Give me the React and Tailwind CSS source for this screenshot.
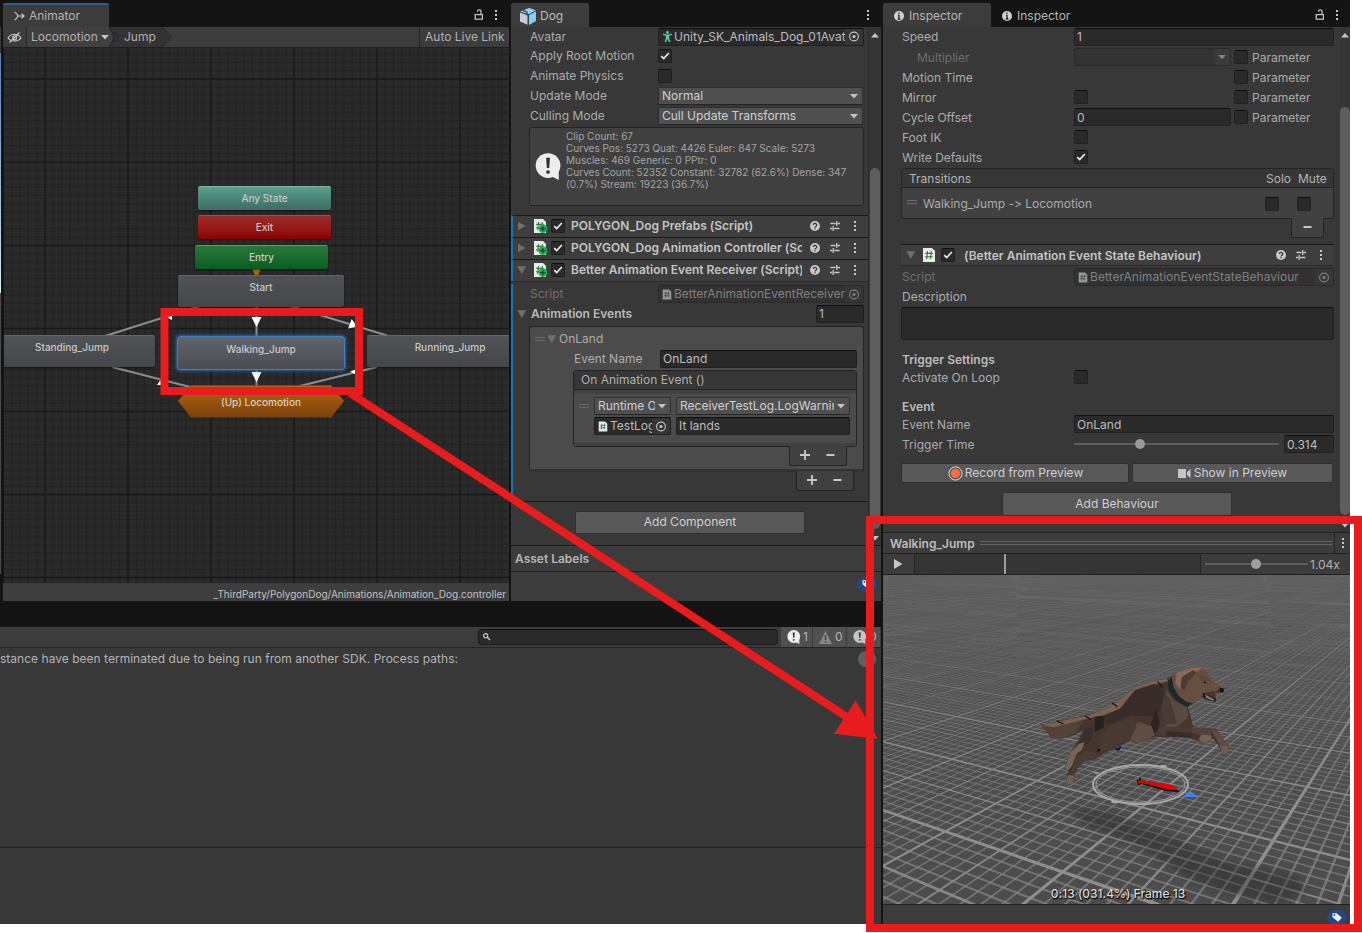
import React from "react";

/* ---------- small shared pieces ---------- */

function Kebab({ className = "" }) {
  return (
    <svg className={"shrink-0 " + className} width="4" height="12" viewBox="0 0 4 12" fill="#c8c8c8">
      <rect x="1" y="1" width="2" height="2" />
      <rect x="1" y="5" width="2" height="2" />
      <rect x="1" y="9" width="2" height="2" />
    </svg>
  );
}

function Lock() {
  return (
    <svg className="shrink-0" width="10" height="12" viewBox="0 0 10 12" fill="none" stroke="#c8c8c8" strokeWidth="1.2">
      <rect x="1.2" y="5.6" width="7.2" height="4.6" />
      <path d="M7 5.6V3a1.6 1.8 0 0 0-3.6-.4" />
    </svg>
  );
}

function Caret({ color = "#c4c4c4" }) {
  return (
    <svg className="shrink-0" width="8" height="5" viewBox="0 0 8 5">
      <path d="M0 0h8L4 4.6z" fill={color} />
    </svg>
  );
}

function Fold({ open }) {
  return (
    <svg className="shrink-0" width="10" height="10" viewBox="0 0 10 10" fill="#6f6f6f">
      {open ? <path d="M.4 1.200h8.800L4.800 9z" /> : <path d="M1 .8v8.400L8.600 5z" />}
    </svg>
  );
}

function Check({ on, className = "" }) {
  return (
    <span
      className={
        "flex h-[14px] w-[14px] shrink-0 items-center justify-center rounded-[2px] border border-[#202020] border-t-[#0f0f0f] bg-[#2a2a2a] " +
        className
      }
    >
      {on && (
        <svg width="10" height="8" viewBox="0 0 10 8" fill="none" stroke="#efefef" strokeWidth="1.6">
          <path d="M1.2 4.2 3.7 6.6 8.8 1" />
        </svg>
      )}
    </span>
  );
}

function Picker({ dim }) {
  return (
    <span className={"flex h-4 w-[18px] shrink-0 items-center justify-center " + (dim ? "bg-[#373737]" : "bg-[#353535]")}>
      <svg width="11" height="11" viewBox="0 0 11 11">
        <circle cx="5" cy="5.500" r="4.4" fill="none" stroke={dim ? "#808080" : "#c4c4c4"} strokeWidth="1.100" />
        <circle cx="5" cy="5.500" r="1.6" fill={dim ? "#808080" : "#c4c4c4"} />
      </svg>
    </span>
  );
}

function ScriptIcon({ dim, badge, big }) {
  return (
    <svg className="shrink-0" width={big ? 14 : 10} height={big ? 14 : 11} viewBox="0 0 14 14" opacity={dim ? 0.55 : 1}>
      <path d="M1 0h9l3 3v11H1z" fill="#e8ece8" />
      <path d="M5.6 3 4.7 11M9.3 3 8.4 11M3.2 5.4h7.6M3 8.7h7.6" stroke="#2c7a35" strokeWidth="1.1" fill="none" />
      {badge && (
        <g>
          <circle cx="9.8" cy="9.6" r="4.4" fill="#10b860" />
          <path d="M9.8 7v5.2M7.2 9.6h5.2" stroke="#0b3a1f" strokeWidth="1.2" />
        </g>
      )}
    </svg>
  );
}

function HelpIcon() {
  return (
    <svg className="shrink-0" width="10" height="10" viewBox="0 0 10 10">
      <circle cx="5" cy="5" r="5" fill="#c8c8c8" />
      <path d="M3.3 4a1.7 1.6 0 1 1 2.4 1.4c-.5.3-.7.5-.7 1" stroke="#333" strokeWidth="1.2" fill="none" />
      <rect x="4.4" y="7.2" width="1.2" height="1.2" fill="#333" />
    </svg>
  );
}

function PresetIcon() {
  return (
    <svg className="shrink-0" width="11" height="10" viewBox="0 0 11 10" stroke="#c8c8c8" strokeWidth="1.3" fill="none">
      <path d="M.5 2.500h5M7.500 2.500h2.500M6.700 0v5M0 7.500h2.200M4.200 7.500H9.500M3.200 5v5" />
    </svg>
  );
}

function InfoDot() {
  return (
    <svg className="shrink-0" width="10" height="10" viewBox="0 0 10 10">
      <circle cx="5" cy="5" r="5" fill="#d0d0d0" />
      <path d="M5 1.6v1.4M5 4v4M4 4.4h1M3.8 8h2.6" stroke="#222" strokeWidth="1.3" fill="none" />
    </svg>
  );
}

function Bubble({ size, fill, mark = "#333" }) {
  return (
    <svg className="shrink-0" width={size} height={size} viewBox="0 0 28 29">
      <circle cx="13.5" cy="13.5" r="13.3" fill={fill} />
      <path d="M17 25l8 4v-9z" fill={fill} />
      <path d="M11.4 5h4.2l-.8 11h-2.6z" fill={mark} />
      <circle cx="13.5" cy="20.4" r="2" fill={mark} />
    </svg>
  );
}

function TagBadge() {
  return (
    <svg className="shrink-0" width="20" height="15" viewBox="0 0 20 15">
      <ellipse cx="10" cy="7.5" rx="10" ry="7.5" fill="#234a80" />
      <path d="M5.5 3.2h4.3l5 4.6-3.7 4-5.6-4.6z" fill="#eef2f8" />
      <circle cx="7.4" cy="5" r=".9" fill="#234a80" />
    </svg>
  );
}

function Grip() {
  return <span className="h-1 w-[10px] shrink-0 border-y border-[#6a6a6a]" />;
}

function Field({ children, className = "" }) {
  return (
    <span
      className={
        "flex h-[18px] items-center overflow-hidden rounded-[2px] border border-[#202020] border-t-[#0f0f0f] bg-[#2a2a2a] pl-[2px] text-[#bcbcbc] " +
        className
      }
    >
      {children}
    </span>
  );
}

function Dropdown({ children, className = "" }) {
  return (
    <span
      className={
        "flex h-[18px] items-center rounded-[2px] border border-[#303030] border-b-[#242424] bg-[#505050] pl-[3px] pr-1 text-[#cfcfcf] " +
        className
      }
    >
      <span className="mr-[3px] min-w-0 flex-1 overflow-hidden">{children}</span>
      <Caret />
    </span>
  );
}

function PlusMinus({ plus, className = "" }) {
  return (
    <span
      className={
        "flex h-5 items-center justify-center gap-4 rounded-b-[3px] border border-t-0 border-[#242424] bg-[#414141] pb-px " +
        className
      }
    >
      {plus && (
        <svg width="10" height="10" viewBox="0 0 10 10">
          <path d="M5 0v10M0 5h10" stroke="#c8c8c8" strokeWidth="1.8" />
        </svg>
      )}
      <svg width="9" height="10" viewBox="0 0 9 10">
        <path d="M.5 5h8" stroke="#c8c8c8" strokeWidth="2" />
      </svg>
    </span>
  );
}

/* ---------- animator ---------- */

const vMajor = [41, 124, 207, 290, 373, 456];
const hMajor = [31, 114.3, 197.5, 280.5, 363.5, 446.5, 529.5];
const vMinor = Array.from({ length: 61 }, (_, i) => -0.5 + i * 8.3);
const hMinor = Array.from({ length: 65 }, (_, i) => -2.2 + i * 8.31);

function GraphLines() {
  return (
    <svg className="absolute inset-0" width="505" height="535" viewBox="0 0 505 535">
      <rect width="505" height="535" fill="#2a2a2a" />
      <g stroke="#232323" strokeWidth="1">
        {vMinor.map((x) => (
          <path key={"v" + x} d={`M${x} 0V535`} />
        ))}
        {hMinor.map((y) => (
          <path key={"h" + y} d={`M0 ${y}H505`} />
        ))}
      </g>
      <g stroke="#1a1a1a" strokeWidth="1.3">
        {vMajor.map((x) => (
          <path key={"V" + x} d={`M${x} 0V535`} />
        ))}
        {hMajor.map((y) => (
          <path key={"H" + y} d={`M0 ${y}H505`} />
        ))}
      </g>
      <g stroke="#8c8c8c" strokeWidth="2" fill="none">
        <path d="M101 288 199 257M283 257 383 287.500M252.500 258V292M252.500 320V340M108 319 190 340M373 319 292 339" />
      </g>
      <g fill="#fff">
        <path d="M247.500 269h10l-5 10zM247.500 324h10l-5 10zM347.700 271l-3.500 9.500 9-1.800zM163 269.500l5-1.500 0 4zM153 337h7l-4-4.500zM354 320.500l-8 3 8 4z" />
      </g>
      <path d="M248 221h9l-3 6h-3z" fill="#a36b05" />
      <linearGradient id="up" x1="0" y1="0" x2="0" y2="1">
        <stop offset="0" stopColor="#b56414" />
        <stop offset="1" stopColor="#7c430a" />
      </linearGradient>
      <path d="M187 337.500h140l13 15.500-13 16H187L174 353z" fill="url(#up)" stroke="#7a4a14" strokeWidth=".6" />
    </svg>
  );
}

function Node({ className, children }) {
  return (
    <div className={"absolute flex justify-center rounded-[2px] text-[10px] font-medium text-[#c8c8c8] shadow-[0_1px_2px_#0008] " + className}>
      {children}
    </div>
  );
}

const GREY = "h-8 w-[166px] border-t border-[#646669] bg-linear-to-b from-[#505357] to-[#454648] leading-[23px]";

function Animator() {
  return (
    <section className="flex w-[506px] shrink-0 flex-col">
      <div className="flex h-[27px] items-end justify-between">
        <div className="flex h-6 w-[106px] items-center gap-1 rounded-t-[2px] border-t-2 border-[#2d5c8c] bg-[#3c3c3c] pl-[11px] text-[#b4b4b4]">
          <svg width="11" height="10" viewBox="0 0 11 10" fill="none" stroke="#c8c8c8" strokeWidth="1.2">
            <path d="M.5 1c2 .3 2.500 4 4.500 4H10M.5 9C2.500 8.700 3 5 5 5M7.500 2.800 10 5 7.500 7.200" />
          </svg>
          Animator
        </div>
        <div className="flex h-6 items-center gap-[10px] pr-[11px]">
          <Lock />
          <Kebab />
        </div>
      </div>
      <div className="flex h-[21px] items-center border-b border-[#202020] bg-[#3c3c3c] text-[#b0b0b0]">
        <span className="flex h-5 w-6 items-center justify-center border-r border-[#262626]">
          <svg width="15" height="11" viewBox="0 0 15 11" fill="none" stroke="#c4c4c4" strokeWidth="1.200">
            <path d="M1 6c3-5 10-5 13 0-3 4-10 4-13 0z" />
            <circle cx="7.500" cy="5.800" r="2" />
            <path d="M12.500.5 2.500 10.500" />
          </svg>
        </span>
        <span className="flex h-5 w-[82px] items-center justify-between bg-[#404040] pl-1">
          Locomotion <Caret />
        </span>
        <svg width="10" height="20" viewBox="0 0 10 20" fill="none">
          <path d="M0 0l5.500 10L0 20z" fill="#404040" />
          <path d="M0 0h4l6 0v20H0l5.500-10z" fill="#333" />
          <path d="M0 0l5.500 10L0 20M4.500 4.500v11L9.500 10z" stroke="#262626" />
        </svg>
        <span className="flex h-5 w-[43px] items-center bg-[#333] pl-[5px]">Jump</span>
        <svg width="11" height="20" viewBox="0 0 11 20">
          <path d="M0 0l10 10L0 20z" fill="#333" />
          <path d="M0 0l10 10L0 20" fill="none" stroke="#292929" />
        </svg>
        <span className="ml-auto flex h-5 w-[90px] items-center border-l border-[#242424] pl-[5px]">Auto Live Link</span>
      </div>
      <div className="relative ml-px h-[535px] overflow-hidden">
        <GraphLines />
        <Node className="left-[194px] top-[138px] h-6 w-[133px] border-t border-[#7ab8a4] bg-linear-to-b from-[#5b9e8b] to-[#3c6d64] leading-[23px]">Any State</Node>
        <Node className="left-[194px] top-[167px] h-6 w-[133px] border-t border-[#b04a4a] bg-linear-to-b from-[#9c2b2b] to-[#8c0000] leading-[23px]">Exit</Node>
        <Node className="left-[191px] top-[197px] h-6 w-[133px] border-t border-[#5a9a66] bg-linear-to-b from-[#28783a] to-[#065e22] leading-[23px]">Entry</Node>
        <Node className={GREY + " left-[174px] top-[227px]"}>Start</Node>
        <Node className={GREY + " left-[-15px] top-[287px]"}>Standing_Jump</Node>
        <Node className={GREY + " left-[363px] top-[287px]"}>Running_Jump</Node>
        <div className="absolute left-[173px] top-[288px] flex h-[34px] w-[168px] justify-center rounded-[3px] border border-[#3f80c4] bg-linear-to-b from-[#60646d] to-[#4a4c50] text-[10px] font-medium leading-[24px] text-[#c8c8c8] shadow-[0_0_3px_1px_#2766a8]">
          Walking_Jump
        </div>
        <div className="absolute left-[174px] top-[342px] w-[166px] text-center text-[10px] font-medium leading-6 text-[#d8cfc4]">(Up) Locomotion</div>
      </div>
      <div className="flex h-[18px] items-center justify-end bg-[#3e3e3e] pr-[3px] pt-[3px] text-[10px] text-[#c0c0c0]">
        _ThirdParty/PolygonDog/Animations/Animation_Dog.controller
      </div>
    </section>
  );
}

/* ---------- dog inspector ---------- */

function DogRow({ label, children, className = "h-5" }) {
  return (
    <div className={"flex items-center pl-[19px] " + className}>
      <span className="w-[128px] shrink-0">{label}</span>
      {children}
    </div>
  );
}

function ComponentHeader({ title, open }) {
  return (
    <div className="flex h-[22px] items-center border-l-2 border-t border-l-[#1b75b5] border-t-[#1a1a1a] bg-[#3e3e3e] pb-px pl-1">
      <Fold open={open} />
      <span className="ml-1 flex w-[18px] justify-center">
        <ScriptIcon big badge />
      </span>
      <Check on className="ml-[2px]" />
      <span className="ml-[6px] mr-px w-[231px] shrink-0 overflow-hidden font-semibold text-[#c4c4c4]">{title}</span>
      <span className="ml-[7px] flex flex-1 items-center">
        <HelpIcon />
        <span className="w-[10px]" />
        <PresetIcon />
        <Kebab className="ml-[12px]" />
      </span>
    </div>
  );
}

function DogPanel() {
  return (
    <section className="flex w-[370px] shrink-0 flex-col">
      <div className="flex h-[27px] items-end justify-between">
        <div className="flex h-6 w-[78px] items-center gap-1 rounded-t-[2px] bg-[#3c3c3c] pl-[9px] pt-[2px] text-[#b8b8b8]">
          <svg width="16" height="17" viewBox="0 0 16 17">
            <path d="M9 0l7 2.600v10.400L9 17z" fill="#7fd0f5" />
            <path d="M0 3.500 9 0l7 2.600-8 4z" fill="#8fd6f6" />
            <path d="M0 4l8 3v10l-8-3.500z" fill="#c8ccd0" />
            <path d="M8 7l8-4.200M8 7v10M0 4l8 3" stroke="#2a3c48" strokeWidth="1" fill="none" />
            <path d="M3 2.400l4 1.800v3" stroke="#2a3c48" strokeWidth="1.200" fill="none" />
          </svg>
          Dog
        </div>
        <div className="flex h-6 items-center pr-[11px]">
          <Kebab />
        </div>
      </div>
      <div className="flex h-[518px] bg-[#383838]">
        <div className="flex w-[357px] flex-col text-[#ababab]">
          <DogRow label="Avatar" className="h-[19px]">
            <Field className="w-[206px]">
              <svg className="mx-[2px] shrink-0" width="9" height="11" viewBox="0 0 9 11" fill="#5ec8b0">
                <circle cx="4.500" cy="1.500" r="1.400" />
                <path d="M0 2.400l3 1h3l3-1v1.300L6.200 5v2.500L7.500 11H6L4.500 8 3 11H1.500l1.300-3.500V5L0 3.700z" />
              </svg>
              <span className="min-w-0 flex-1 overflow-hidden">Unity_SK_Animals_Dog_01Avat</span>
              <Picker />
            </Field>
          </DogRow>
          <DogRow label="Apply Root Motion"><Check on /></DogRow>
          <DogRow label="Animate Physics"><Check /></DogRow>
          <DogRow label="Update Mode"><Dropdown className="w-[205px]">Normal</Dropdown></DogRow>
          <DogRow label="Culling Mode"><Dropdown className="w-[205px]">Cull Update Transforms</Dropdown></DogRow>
          <div className="ml-[18px] mt-px flex h-[79px] w-[335px] shrink-0 items-center rounded-[3px] border border-[#232323] bg-[#404040] pl-[5px]">
            <Bubble size={27} fill="#ededed" />
            <p className="mb-[13px] ml-1 whitespace-pre text-[10px] leading-[12.100px] text-[#a4a4a4]">
              {"Clip Count: 67\nCurves Pos: 5273 Quat: 4426 Euler: 847 Scale: 5273\nMuscles: 469 Generic: 0 PPtr: 0\nCurves Count: 52352 Constant: 32782 (62.6%) Dense: 347\n(0.7%) Stream: 19223 (36.7%)"}
            </p>
          </div>
          <div className="h-[9px]" />
          <ComponentHeader title="POLYGON_Dog Prefabs (Script)" />
          <ComponentHeader title="POLYGON_Dog Animation Controller (Script)" />
          <ComponentHeader title="Better Animation Event Receiver (Script)" open />
          <div className="h-[3px] border-t border-[#2c2c2c]" />
          <div className="flex h-[217px] flex-col border-l-2 border-[#1b75b5]">
            <div className="flex h-5 items-center pl-[17px] text-[#707070]">
              <span className="w-[128px]">Script</span>
              <span className="flex h-[18px] w-[206px] items-center rounded-[2px] border border-[#2a2a2a] bg-[#323232] pl-[3px] text-[#808080]">
                <ScriptIcon dim />
                <span className="ml-[2px] min-w-0 flex-1 overflow-hidden">BetterAnimationEventReceiver</span>
                <Picker dim />
              </span>
            </div>
            <div className="flex h-5 items-center pl-1">
              <Fold open />
              <span className="ml-1 flex-1 font-semibold text-[#b8b8b8]">Animation Events</span>
              <Field className="mr-1 w-[48px]">1</Field>
            </div>
            <div className="ml-4 mt-[2px] flex h-[146px] w-[335px] shrink-0 flex-col rounded-[3px] border border-[#242424] border-b-[3px] border-b-[#323232] bg-[#4b4b4b] pt-[2px]">
              <div className="flex h-5 items-center pl-[5px]">
                <Grip />
                <span className="w-[2px]" />
                <Fold open />
                <span className="ml-[2px]">OnLand</span>
              </div>
              <div className="flex h-5 items-center pl-[44px]">
                <span className="w-[86px]">Event Name</span>
                <Field className="w-[197px]">OnLand</Field>
              </div>
              <div className="ml-[43px] mt-px h-[77px] w-[284px] shrink-0 rounded-[3px] border border-[#242424] bg-[#4b4b4b]">
                <div className="flex h-[19px] items-center border-b border-[#242424] bg-[#363636] pl-[7px] text-[#b0b0b0]">On Animation Event ()</div>
                <div className="h-1 bg-[#414141]" />
                <div className="mt-[2px] flex h-5 items-center pl-[5px]">
                  <Grip />
                  <Dropdown className="ml-[5px] w-[77px] whitespace-nowrap">Runtime Only</Dropdown>
                  <Dropdown className="ml-[5px] w-[174px] whitespace-nowrap">ReceiverTestLog.LogWarning</Dropdown>
                </div>
                <div className="flex h-5 items-center pl-5">
                  <Field className="w-[77px] pl-[3px]">
                    <ScriptIcon />
                    <span className="ml-[2px] min-w-0 flex-1 overflow-hidden">TestLog</span>
                    <Picker />
                  </Field>
                  <Field className="ml-[5px] w-[174px]">It lands</Field>
                </div>
                <div className="mt-[7px] h-[3px] bg-[#414141]" />
              </div>
              <PlusMinus plus className="-mt-px ml-[259px] w-[58px] pr-[2px]" />
            </div>
            <PlusMinus plus className="-mt-px ml-[283px] w-[58px] shrink-0 pr-[2px]" />
          </div>
          <div className="h-11 border-t border-[#1a1a1a] pt-[9px]">
            <button className="ml-[64px] block h-[23px] w-[230px] rounded-[2px] border border-[#303030] bg-[#585858] pb-[2px] text-center text-[#cfcfcf]">
              Add Component
            </button>
          </div>
        </div>
        <div className="flex w-[13px] flex-col items-center border-l border-[#2e2e2e] bg-[#353535] pt-[6px]">
          <svg width="8" height="5" viewBox="0 0 8 5"><path d="M0 4.500h8L4 0z" fill="#c4c4c4" /></svg>
          <span className="mt-[130px] h-[361px] w-[10px] rounded-full bg-[#5e5e5e]" />
          <span className="mt-[7px]"><Caret /></span>
        </div>
      </div>
      <div className="flex h-[26px] items-center border-t border-[#1c1c1c] bg-[#3c3c3c] pl-1 font-semibold text-[#b4b4b4]">Asset Labels</div>
      <div className="flex h-[30px] items-center justify-end border-t border-[#1c1c1c] bg-[#3c3c3c] pb-1 pr-1">
        <TagBadge />
      </div>
    </section>
  );
}

/* ---------- console ---------- */

function ConsolePanel() {
  return (
    <section className="flex flex-1 flex-col bg-[#383838] text-[#b4b4b4]">
      <div className="flex h-[21px] items-center border-b border-[#232323] bg-[#3c3c3c]">
        <div className="ml-[478px] flex h-4 w-[300px] items-center rounded-[4px] border border-[#1c1c1c] border-t-[#0f0f0f] bg-[#2a2a2a] pl-1">
          <svg width="8" height="8" viewBox="0 0 8 8" fill="none" stroke="#c8c8c8" strokeWidth="1.100">
            <circle cx="2.700" cy="2.700" r="2.100" />
            <path d="M4.300 4.300 7 7" strokeWidth="1.400" />
          </svg>
        </div>
        <div className="ml-[3px] flex h-5 gap-px">
          <span className="flex w-[31px] items-center gap-[2px] bg-[#505050] pl-[6px]">
            <Bubble size={14} fill="#eee" /> 1
          </span>
          <span className="flex w-[33px] items-center gap-[3px] bg-[#505050] pl-[6px]">
            <svg width="13" height="13" viewBox="0 0 13 13"><path d="M6.500 0 13 13H0z" fill="#858585" /><path d="M6.500 4v5M6.500 10v1.500" stroke="#444" strokeWidth="1.400" /></svg> 0
          </span>
          <span className="flex w-[33px] items-center gap-[2px] bg-[#505050] pl-[6px]">
            <Bubble size={14} fill="#c4c4c4" /> 0
          </span>
        </div>
      </div>
      <div className="flex h-[199px] items-start justify-between">
        <p className="pt-[3px] tracking-[0.02px]">stance have been terminated due to being run from another SDK. Process paths:</p>
        <span className="mr-[5px] mt-[3px] flex h-4 w-[18px] items-center justify-center rounded-full bg-[#606060] text-[10px] text-[#333]">1</span>
      </div>
      <div className="flex-1 border-t border-[#242424]" />
    </section>
  );
}

/* ---------- state inspector ---------- */

function StateRow({ label, param, dim, children }) {
  return (
    <div className="flex h-5 items-center">
      <span className={"shrink-0 pt-px " + (dim ? "w-[157px] pl-[15px] text-[#6e6e6e]" : "w-[172px]")}>{label}</span>
      {dim && <span className="w-[15px]" />}
      <span className="flex w-[157px] shrink-0">{children}</span>
      {param && (
        <span className="ml-[3px] flex items-center gap-1">
          <Check /> <span className="pt-px">Parameter</span>
        </span>
      )}
    </div>
  );
}

function StateInspector() {
  return (
    <div className="flex h-[505px] bg-[#383838]">
      <div className="flex w-[457px] shrink-0 flex-col pl-[19px] text-[#ababab]">
        <div className="flex h-5 items-center">
          <span className="w-[172px]">Speed</span>
          <Field className="w-[260px]">1</Field>
        </div>
        <StateRow label="Multiplier" dim param>
          <span className="flex h-[18px] w-[157px] items-center justify-end rounded-[2px] border border-[#2a2a2a] bg-[#343434]">
            <span className="flex h-4 w-4 items-center justify-center bg-[#3a3a3a]"><Caret color="#808080" /></span>
          </span>
        </StateRow>
        <StateRow label="Motion Time" param />
        <StateRow label="Mirror" param><Check /></StateRow>
        <StateRow label="Cycle Offset" param><Field className="w-[157px] pt-px">0</Field></StateRow>
        <StateRow label="Foot IK"><Check /></StateRow>
        <StateRow label="Write Defaults"><Check on /></StateRow>
        <div className="-ml-px mt-px h-[51px] w-[433px] shrink-0 rounded-[3px] border border-[#242424] bg-[#414141]">
          <div className="flex h-[19px] items-center border-b border-[#242424] bg-[#363636] pl-[7px] pt-px text-[#b4b4b4]">
            <span className="w-[357px]">Transitions</span>
            <span className="w-[32px]">Solo</span>
            <span>Mute</span>
          </div>
          <div className="flex h-[30px] items-center pl-[5px] pt-px">
            <span className="mb-[3px] flex"><Grip /></span>
            <span className="ml-[6px] w-[342px]">Walking_Jump -&gt; Locomotion</span>
            <Check />
            <Check className="ml-[18px]" />
          </div>
        </div>
        <PlusMinus className="-mt-px ml-[389px] w-[33px] shrink-0 pr-px" />
        <div className="-ml-px mt-[6px] flex h-[22px] w-[433px] shrink-0 items-center border-b border-t border-b-[#2c2c2c] border-t-[#1a1a1a] bg-[#3e3e3e] pl-[5px]">
          <Fold open />
          <span className="ml-[6px] flex"><ScriptIcon big /></span>
          <Check on className="ml-[5px]" />
          <span className="ml-[9px] flex-1 pt-px font-semibold tracking-[0.02px] text-[#c4c4c4]">(Better Animation Event State Behaviour)</span>
          <HelpIcon />
          <span className="w-[10px]" />
          <PresetIcon />
          <Kebab className="ml-[12px] mr-[11px]" />
        </div>
        <div className="mt-px flex h-5 items-center text-[#707070]">
          <span className="w-[172px]">Script</span>
          <span className="flex h-[18px] w-[260px] items-center rounded-[2px] border border-[#2a2a2a] bg-[#323232] pl-[3px] text-[#808080]">
            <ScriptIcon dim />
            <span className="ml-[2px] flex-1 tracking-[0.03px]">BetterAnimationEventStateBehaviour</span>
            <Picker dim />
          </span>
        </div>
        <div className="flex h-5 items-center">Description</div>
        <div className="-ml-px h-[33px] w-[433px] rounded-[3px] border border-[#1e1e1e] border-t-[#0f0f0f] bg-[#2a2a2a]" />
        <div className="mt-[10px] flex h-[18px] items-center pt-px font-semibold text-[#bcbcbc]">Trigger Settings</div>
        <div className="-mt-px"><StateRow label="Activate On Loop"><Check /></StateRow></div>
        <div className="mt-[10px] flex h-[18px] items-center pt-px font-semibold text-[#bcbcbc]">Event</div>
        <div className="-mt-px flex h-5 items-center">
          <span className="w-[172px] pt-px">Event Name</span>
          <Field className="w-[260px] pt-px">OnLand</Field>
        </div>
        <div className="flex h-5 items-center">
          <span className="w-[172px] pt-px">Trigger Time</span>
          <span className="flex w-[205px] items-center">
            <span className="h-[2px] w-[61px] bg-[#5e5e5e]" />
            <span className="h-[10px] w-[10px] rounded-full bg-[#999]" />
            <span className="h-[2px] flex-1 bg-[#5e5e5e]" />
          </span>
          <Field className="ml-[5px] w-[50px] pt-px">0.314</Field>
        </div>
        <div className="-ml-px mt-[9px] flex h-5 gap-[3px] text-[#cfcfcf]">
          <button className="flex w-[228px] items-center justify-center rounded-[2px] border border-[#303030] bg-[#585858] pl-px">
            <svg width="15" height="15" viewBox="0 0 15 15"><circle cx="7.500" cy="7.500" r="6.600" fill="none" stroke="#ddd" /><circle cx="7.500" cy="7.500" r="4.700" fill="#ff6b40" /></svg>
            <span className="ml-[2px]">Record from Preview</span>
          </button>
          <button className="flex w-[201px] items-center justify-center gap-[3px] rounded-[2px] border border-[#303030] bg-[#585858]">
            <svg width="13" height="9" viewBox="0 0 13 9" fill="#c4c4c4"><path d="M0 0h8v9H0zM9 3l3.500-3v9L9 6z" /></svg>
            Show in Preview
          </button>
        </div>
        <button className="ml-[100px] mt-[9px] h-[24px] w-[230px] shrink-0 rounded-[2px] border border-[#303030] bg-[#585858] text-center text-[#cfcfcf]">
          Add Behaviour
        </button>
      </div>
      <div className="flex w-[10px] flex-col items-center bg-[#353535] pt-[6px]">
        <svg width="8" height="5" viewBox="0 0 8 5"><path d="M0 4.500h8L4 0z" fill="#c4c4c4" /></svg>
        <span className="mt-[69px] h-[408px] w-[10px] rounded-full bg-[#5e5e5e]" />
        <span className="mt-[8px]"><Caret /></span>
      </div>
    </div>
  );
}

/* ---------- 3D preview ---------- */

const VPA = [573.7, -25];
const VPB = [-756.3, -25];

/* One floor line: a thin wedge that narrows to its vanishing point. */
function wedge(vp, baseX, w) {
  const k = 1.6;
  const y = vp[1] + 354 * k;
  const a = vp[0] + (baseX - w / 2 - vp[0]) * k;
  const b = vp[0] + (baseX + w / 2 - vp[0]) * k;
  return `M${vp[0]} ${vp[1]}L${a.toFixed(1)} ${y}L${b.toFixed(1)} ${y}z`;
}

function family(vp, origin, step, from, to, widths) {
  const thin = [];
  const mid = [];
  const bold = [];
  for (let i = from; i <= to; i++) {
    const x = origin + i * step;
    if (i % 10 === 0) bold.push(wedge(vp, x, widths[2]));
    else if (i % 5 === 0) mid.push(wedge(vp, x, widths[1]));
    else thin.push(wedge(vp, x, widths[0]));
  }
  return [thin.join(""), mid.join(""), bold.join("")];
}

const famA = family(VPA, 140.3, 21, -420, 40, [3, 3.6, 5]);
const famB = family(VPB, 640.3, 36.7, -30, 470, [6, 7, 11]);

function Dog() {
  return (
    <g transform="translate(137 65) scale(.3333)">
      <path d="M65 258 120 243 200 226 270 200 310 170 345 142 400 123 445 114 470 98 515 83 545 84 560 100 574 120 600 140 611 150 604 158 585 158 588 184 560 180 545 170 520 188 503 200 512 230 520 262 590 268 612 300 629 322 625 336 608 340 596 318 575 290 572 304 545 308 510 294 440 290 405 292 375 304 352 308 330 302 290 322 250 342 225 358 195 364 172 384 162 410 160 430 146 434 138 418 146 396 134 384 138 368 156 330 175 300 190 270 165 284 120 297 92 292z" fill="#44352f" />
      <path d="M65 258 120 243 200 228 185 250 165 280 120 297 92 292z" fill="#54423a" />
      <path d="M68 256 140 240 205 226 270 200 310 170 345 142 400 123 440 116 446 124 400 134 350 156 300 206 250 226 195 238 100 262z" fill="#7c6152" />
      <path d="M345 150 400 132 428 140 436 190 405 230 330 225 262 258 245 232 300 206z" fill="#392c2a" />
      <path d="M445 116 470 98 515 83 545 84 560 100 574 120 600 140 590 154 552 158 545 174 520 188 495 190 470 160z" fill="#664e41" />
      <path d="M470 98 515 83 548 85 535 92 505 98 490 120 480 148 466 130z" fill="#8a6a57" />
      <path d="M485 112 520 90 528 100 502 128 492 152 482 140z" fill="#4e3b33" />
      <path d="M530 100 565 112 574 124 545 122z" fill="#5d473b" />
      <path d="M456 110 443 124 446 150 470 182 500 200 520 190 500 186 476 168 460 140z" fill="#182926" />
      <path d="M440 150 460 180 500 202 505 232 470 262 435 260 424 200z" fill="#5b483f" />
      <path d="M424 200 438 160 452 185 470 250 430 256z" fill="#493a34" />
      <path d="M408 205 392 255 408 288 420 250z" fill="#2b2424" />
      <path d="M420 262 516 262 520 284 440 290 404 282z" fill="#4b3a33" />
      <path d="M440 272 518 280 516 292 436 290z" fill="#382c29" />
      <path d="M516 262 580 267 572 282 575 300 545 306 538 284 516 280z" fill="#544239" />
      <path d="M545 284 574 286 572 302 545 308 536 298z" fill="#766153" />
      <path d="M574 268 596 276 629 322 625 336 606 340 598 316z" fill="#5e4c42" />
      <path d="M600 318 627 318 624 337 608 340z" fill="#705c50" />
      <path d="M352 245 395 258 404 286 375 304 352 308 330 300 340 270z" fill="#5f4c42" />
      <path d="M262 262 340 230 350 262 330 296 280 322 250 342 235 300z" fill="#4a3931" />
      <path d="M225 230 250 228 252 262 224 276z" fill="#251f20" />
      <path d="M195 262 220 258 214 300 190 322 172 350 166 384 152 396 158 350 172 312 186 296z" fill="#3b2f2b" />
      <path d="M176 312 194 306 186 330 170 342 156 378 144 392 134 384 152 336z" fill="#766353" />
      <path d="M170 350 200 330 240 345 195 364 172 384 162 408 150 404 160 370z" fill="#4d3b33" />
      <path d="M146 404 162 408 160 430 146 434 138 418z" fill="#735f51" />
      <path d="M276 188 292 200M110 242 130 252M412 124 428 142M195 228 212 238" stroke="#181414" strokeWidth="4" />
      <path d="M600 145 611 145 611 157 601 157zM550 122 562 130 553 130z" fill="#0d0f14" />
      <path d="M548 158 588 176 586 186 560 178 550 172z" fill="#171214" />
      <path d="M554 163 584 178 580 183 558 174z" fill="#8a706c" />
      <path d="M282 325h22l-8 6-8-2z" fill="#000" />
      <rect x="296" y="318" width="8" height="6" fill="#0a12d8" />
      <rect x="232" y="328" width="8" height="6" fill="#200" />
    </g>
  );
}

function Scene() {
  return (
    <svg className="block" width="467" height="329" viewBox="0 0 467 329">
      <defs>
        <linearGradient id="floor" x1="0" y1="0" x2="0" y2="1">
          <stop offset="0" stopColor="#565656" />
          <stop offset=".25" stopColor="#525252" />
          <stop offset=".6" stopColor="#4f4f4f" />
          <stop offset="1" stopColor="#4c4c4c" />
        </linearGradient>
        <linearGradient id="haze" x1="0" y1="0" x2="0" y2="1">
          <stop offset="0" stopColor="#606060" stopOpacity=".8" />
          <stop offset=".12" stopColor="#5d5d5d" stopOpacity=".5" />
          <stop offset=".45" stopColor="#555" stopOpacity=".1" />
          <stop offset=".7" stopColor="#505050" stopOpacity="0" />
        </linearGradient>
        <filter id="soft"><feGaussianBlur stdDeviation="3" /></filter>
      </defs>
      <rect width="467" height="329" fill="url(#floor)" />
      <g fill="#8e8e8e">
        <path d={famA[0]} opacity=".62" />
        <path d={famB[0]} opacity=".62" />
        <path d={famA[1]} opacity=".9" />
        <path d={famB[1]} opacity=".9" />
        <path d={famA[2]} />
        <path d={famB[2]} />
      </g>
      <rect width="467" height="329" fill="url(#haze)" />
      <path d="M184 232 225 236 290 262 340 285 410 300 425 315 395 329 340 318 300 300 255 270 205 252z" fill="#1c1c1c" opacity=".32" filter="url(#soft)" />
      <g fill="none" stroke="#a8a8a8">
        <ellipse cx="257.500" cy="209.500" rx="47.500" ry="19.500" strokeWidth="1.900" />
        <ellipse cx="257.500" cy="209.500" rx="44.500" ry="17.700" strokeWidth="1.300" opacity=".7" />
      </g>
      <path d="M209 197h7l-2 2zM277 190h6v3h-4zM228 228h6l3-2h-8z" fill="#a8a8a8" />
      <Dog />
      <path d="M254 205l3 1 20 4 12 2 8 5-14-1-24-7-4 1z" fill="#000" />
      <path d="M256 205l22 3.500 10 1 8 6-13-1.500-24-6-5 1z" fill="#e60000" />
      <path d="M257 202v4" stroke="#0a2a0a" strokeWidth="1.500" />
      <path d="M299.500 222l8-6 8 6z" fill="#4a7fe8" />
    </svg>
  );
}

function Preview() {
  return (
    <>
      <div className="flex h-[22px] items-center border-y border-[#202020] bg-[#3c3c3c]">
        <span className="pl-[7px] pt-px font-semibold text-[#bdbdbd]">Walking_Jump</span>
        <span className="ml-[5px] h-1 flex-1 border-y border-[#646464]" />
        <span className="ml-[2px] flex h-5 w-4 items-center justify-center border-l border-[#242424]"><Kebab /></span>
      </div>
      <div className="flex h-[21px] items-center border-b border-[#202020] bg-[#353535]">
        <span className="flex h-5 w-8 items-center border-r border-[#242424] bg-[#3c3c3c] pl-[11px]">
          <svg width="9" height="10" viewBox="0 0 9 10"><path d="M0 0v10l8.500-5z" fill="#c8c8c8" /></svg>
        </span>
        <span className="ml-[89px] h-5 w-[2px] bg-[#9c9c9c]" />
        <span className="ml-auto flex h-5 w-[150px] items-center border-l border-[#242424] bg-[#3c3c3c] pl-1 text-[#b0b0b0]">
          <span className="h-[2px] w-[46px] bg-[#5e5e5e]" />
          <span className="h-[10px] w-[10px] rounded-full bg-[#a0a0a0]" />
          <span className="mr-[2px] h-[2px] w-[47px] bg-[#5e5e5e]" />
          <span className="pt-px">1.04x</span>
        </span>
      </div>
      <div className="relative h-[330px] border-b border-[#202020]">
        <Scene />
        <div className="absolute left-[3px] right-0 top-[310px] text-center font-medium leading-[18px] text-[#dcdcdc] [text-shadow:0_1px_1px_#000,1px_1px_1px_#000]">
          0:13 (031.4%) Frame 13
        </div>
      </div>
      <div className="flex flex-1 items-start justify-end overflow-hidden bg-[#3c3c3c] pr-[3px] pt-[5px]">
        <TagBadge />
      </div>
    </>
  );
}

function Inspector() {
  return (
    <section className="flex w-[467px] shrink-0 flex-col">
      <div className="flex h-[27px] items-end">
        <div className="flex h-6 w-[108px] items-center gap-[5px] rounded-t-[2px] bg-[#3c3c3c] pl-[11px] pt-[2px] text-[#b4b4b4]">
          <InfoDot /> Inspector
        </div>
        <div className="flex h-6 items-center gap-[5px] pl-[11px] pt-[2px] text-[#b4b4b4]">
          <InfoDot /> Inspector
        </div>
        <div className="ml-auto flex h-6 items-center gap-[10px] pr-[11px]">
          <Lock />
          <Kebab />
        </div>
      </div>
      <StateInspector />
      <Preview />
    </section>
  );
}

/* ---------- callouts drawn over the windows ---------- */

function Callouts() {
  return (
    <svg className="pointer-events-none absolute left-0 top-0" width="1362" height="933" viewBox="0 0 1362 933">
      <g fill="none" stroke="#e81c1c" strokeWidth="8">
        <rect x="164.500" y="312" width="194.500" height="79" />
        <rect x="870" y="520" width="488" height="408" />
        <path d="M350 393 850 719" />
      </g>
      <path d="M855.700 700.500 878 739 834 733.700z" fill="#e81c1c" />
    </svg>
  );
}

export default function App() {
  return (
    <main className="relative h-[933px] w-[1362px] overflow-hidden bg-white font-['Inter',sans-serif] text-[12px] leading-4 whitespace-nowrap [font-feature-settings:'calt'_0]">
      <div className="flex h-[924px] w-[1350px] bg-[#141414]">
        <div className="flex w-[881px] shrink-0 flex-col">
          <div className="flex h-[601px]">
            <div className="w-px pt-[27px]">
              <div className="h-[26px] bg-[#3c3c3c]" />
              <div className="h-[240px] bg-linear-to-b from-[#5a7bb5] to-[#d8ecf2]" />
              <div className="h-[281px] bg-[#4c4c4c]" />
            </div>
            <div className="w-[2px]" />
            <Animator />
            <div className="w-[2px]" />
            <DogPanel />
          </div>
          <div className="h-[26px]" />
          <ConsolePanel />
        </div>
        <div className="w-[2px]" />
        <Inspector />
      </div>
      <Callouts />
    </main>
  );
}
